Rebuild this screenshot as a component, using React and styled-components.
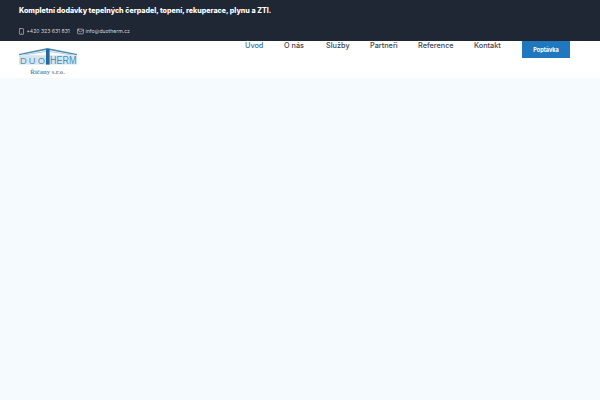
import React from "react";
import styled, { createGlobalStyle } from "styled-components";
import { Smartphone, Mail } from "lucide-react";

const links = [
  { label: "Úvod", width: 39, active: true },
  { label: "O nás", width: 42 },
  { label: "Služby", width: 44 },
  { label: "Partneři", width: 48 },
  { label: "Reference", width: 56 },
  { label: "Kontakt", width: 48 },
];

const App = () => (
  <Page>
    <GlobalStyle />
    <TopBar>
      <Tagline>Kompletní dodávky tepelných čerpadel, topení, rekuperace, plynu a ZTI.</Tagline>
      <Contacts>
        <Contact>
          <Smartphone size={7} strokeWidth={2} />
          +420 323 631 831
        </Contact>
        <Contact>
          <Mail size={7} strokeWidth={2} />
          info@duotherm.cz
        </Contact>
      </Contacts>
    </TopBar>
    <Header>
      <Logo viewBox="0 0 60 32" aria-label="Duotherm">
        <path d="M1 8 L29.5 2 L59 8 L59 9.2 L29.5 3.8 L1 9.2 Z" fill="#4a89b0" />
        <path d="M6 9 L29.5 5.2 L54 9" fill="none" stroke="#9dbfd5" strokeWidth="0.8" />
        <rect x="1" y="9.2" width="58" height="9.4" fill="#d6e6f1" />
        <rect x="28" y="3" width="3.6" height="15.6" fill="#1f6b9e" />
        <text x="2" y="17.6" fontSize="9.4" fontFamily="Liberation Sans, sans-serif" fill="#5c90b3" textLength="25">
          DUO
        </text>
        <text x="32" y="17.8" fontSize="10" fontFamily="Liberation Sans, sans-serif" fill="#4a90bb" textLength="26.5" lengthAdjust="spacingAndGlyphs">
          HERM
        </text>
        <text x="29.5" y="27.6" fontSize="6.6" fontWeight="700" fontFamily="Liberation Serif, serif" fill="#6f8fa6" textAnchor="middle">
          Říčany s.r.o.
        </text>
      </Logo>
      <Nav>
        {links.map((link) => (
          <NavLink key={link.label} href="#" $active={link.active} $width={link.width}>
            {link.label}
          </NavLink>
        ))}
      </Nav>
      <QuoteButton href="#">Poptávka</QuoteButton>
    </Header>
    <Main />
  </Page>
);

const GlobalStyle = createGlobalStyle`
  html, body {
    margin: 0;
    height: 100%;
    overflow: hidden;
    background: #f5fafe;
  }
  * {
    box-sizing: border-box;
  }
`;

const Page = styled.div`
  display: flex;
  flex-direction: column;
  height: 400px;
  font-family: "Inter", "Liberation Sans", sans-serif;
`;

const TopBar = styled.div`
  height: 41px;
  padding: 6px 18px 0 19px;
  background: #1f2634;
  color: #fff;
`;

const Tagline = styled.div`
  font-size: 7.1px;
  font-weight: 800;
  line-height: 10px;
`;

const Contacts = styled.div`
  display: flex;
  gap: 8px;
  margin-top: 11px;
`;

const Contact = styled.div`
  display: flex;
  align-items: center;
  gap: 1.5px;
  font-size: 5.1px;
  line-height: 8px;
  color: #d5d8dd;

  svg {
    margin-left: -1px;
  }
`;

const Header = styled.header`
  display: flex;
  align-items: flex-start;
  height: 37px;
  padding: 0 30px 0 18px;
  background: #fff;
`;

const Logo = styled.svg`
  width: 60px;
  height: 32px;
  margin-top: 5px;
`;

const Nav = styled.nav`
  display: flex;
  margin-left: auto;
`;

const NavLink = styled.a`
  width: ${(props) => props.$width}px;
  font-size: 7.3px;
  font-weight: 500;
  line-height: 9px;
  text-decoration: none;
  color: ${(props) => (props.$active ? "#2f75ab" : "#3d4450")};
`;

const QuoteButton = styled.a`
  display: flex;
  align-items: center;
  justify-content: center;
  width: 48px;
  height: 17px;
  background: #1f77bd;
  color: #fff;
  font-size: 5.6px;
  font-weight: 700;
  text-decoration: none;
`;

const Main = styled.main`
  flex: 1;
  background: #f5fafe;
`;

export default App;
